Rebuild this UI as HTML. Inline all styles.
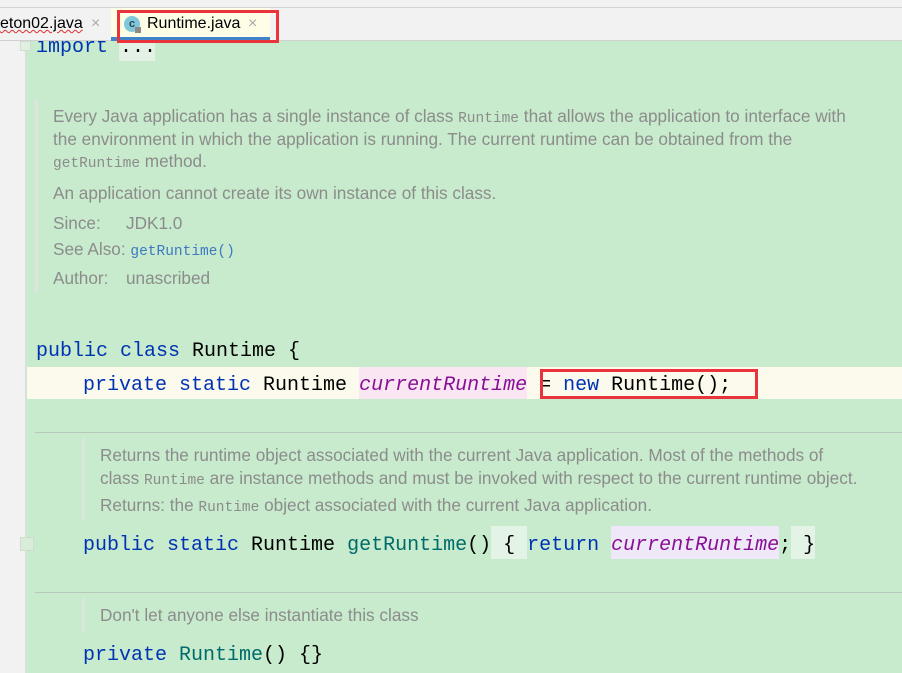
<!DOCTYPE html>
<html><head><meta charset="utf-8"><style>
*{margin:0;padding:0;box-sizing:border-box}
body{width:902px;height:673px;overflow:hidden;background:#c7ebcc;position:relative;font-family:"Liberation Sans",sans-serif}
.a{position:absolute;white-space:pre}
.m{font-family:"Liberation Mono","DejaVu Sans Mono",monospace;font-size:20px;line-height:32px;color:#000}
.k{color:#0033b3}.f{color:#006b6b}.i{color:#871094;font-style:italic}
.d{font-size:17.2px;color:#8c8c8c;line-height:22px}
.dm{font-family:"Liberation Mono",monospace;font-size:14.5px}
.hr{position:absolute;height:1px;background:#b8c8ba;left:35px;right:0}
.bar{position:absolute;width:3px;background:#dde6de}
</style></head><body>
<div class="a" style="left:119px;top:41px;width:36px;height:20px;background:#e4f2e6"></div>
<div class="a m" style="left:36px;top:32px"><span class="k">import</span> ...</div>

<div class="a" style="left:0;top:0;width:902px;height:41px;background:#f2f2f2;border-bottom:1px solid #d0d0d0"></div>
<div class="a" style="left:0;top:7px;width:902px;height:1px;background:#d4d4d4"></div>
<div class="a" style="left:0;top:41px;width:26px;height:632px;background:#f2f2f2;border-right:1px solid #dcdcdc"></div>
<div class="a" style="left:0;top:13px;font-size:16px;line-height:22px;color:#000;text-decoration:underline wavy #e03030;text-decoration-thickness:1px">eton02.java</div>
<div class="a" style="left:91px;top:13px;font-size:16px;line-height:22px;color:#aaa">×</div>
<div class="a" style="left:111px;top:8px;width:159px;height:33px;background:#fefde6;border-bottom:4px solid #4083c9"></div>
<div class="a" style="left:124px;top:16px;width:16px;height:16px;border-radius:50%;background:#7fc8db;color:#2b4650;font-size:11px;font-weight:bold;text-align:center;line-height:16px">c</div>
<div class="a" style="left:135px;top:27px;width:6px;height:6px;background:#8a8a8a"></div>
<div class="a" style="left:147px;top:13px;font-size:16px;line-height:22px;color:#000">Runtime.java</div>
<div class="a" style="left:248px;top:13px;font-size:16px;line-height:22px;color:#aaa">×</div>
<div class="a" style="left:117px;top:10px;width:162px;height:33px;border:3px solid #e8343a"></div>
<div class="a" style="left:20px;top:41px;width:11px;height:10px;border:1px solid #d0dcd0;background:#e2f0e3"></div>

<div class="bar" style="left:35px;top:100px;height:192px"></div>
<div class="a d" style="left:53px;top:105px">Every Java application has a single instance of class <span class="dm">Runtime</span> that allows the application to interface with</div>
<div class="a d" style="left:53px;top:128px">the environment in which the application is running. The current runtime can be obtained from the</div>
<div class="a d" style="left:53px;top:150px"><span class="dm">getRuntime</span> method.</div>
<div class="a d" style="left:53px;top:182px">An application cannot create its own instance of this class.</div>
<div class="a d" style="left:53px;top:212px">Since:</div><div class="a d" style="left:126px;top:212px">JDK1.0</div>
<div class="a d" style="left:53px;top:238px">See Also: <span class="dm" style="color:#3d7ac2">getRuntime()</span></div>
<div class="a d" style="left:53px;top:267px">Author:</div><div class="a d" style="left:126px;top:267px">unascribed</div>

<div class="a m" style="left:36px;top:336px"><span class="k">public class</span> Runtime {</div>
<div class="a" style="left:27px;top:367px;width:875px;height:32px;background:#fcfaed"></div>
<div class="a" style="left:359px;top:367px;width:168px;height:32px;background:#f9e6f2"></div>
<div class="a m" style="left:83px;top:370px"><span class="k">private static</span> Runtime <span class="i">currentRuntime</span> = <span class="k">new</span> Runtime();</div>
<div class="a" style="left:540px;top:369px;width:218px;height:30px;border:3px solid #e8343a"></div>

<div class="hr" style="top:432px"></div>
<div class="bar" style="left:82px;top:438px;height:82px"></div>
<div class="a d" style="left:100px;top:444px">Returns the runtime object associated with the current Java application. Most of the methods of</div>
<div class="a d" style="left:100px;top:467px">class <span class="dm">Runtime</span> are instance methods and must be invoked with respect to the current runtime object.</div>
<div class="a d" style="left:100px;top:494px">Returns: the <span class="dm">Runtime</span> object associated with the current Java application.</div>

<div class="a" style="left:20px;top:537px;width:14px;height:14px;border:1px solid #d0dcd0;background:#d8ecd9"></div>
<div class="a" style="left:491px;top:526px;width:36px;height:33px;background:#e3f3e5"></div>
<div class="a" style="left:611px;top:526px;width:168px;height:33px;background:#eee8f8"></div>
<div class="a" style="left:791px;top:526px;width:24px;height:33px;background:#e3f3e5"></div>
<div class="a m" style="left:83px;top:530px"><span class="k">public static</span> Runtime <span class="f">getRuntime</span>() { <span class="k">return</span> <span class="i">currentRuntime</span>; }</div>

<div class="hr" style="top:592px"></div>
<div class="bar" style="left:82px;top:598px;height:33px"></div>
<div class="a d" style="left:100px;top:604px">Don't let anyone else instantiate this class</div>
<div class="a m" style="left:83px;top:640px"><span class="k">private</span> <span class="f">Runtime</span>() {}</div>
</body></html>
